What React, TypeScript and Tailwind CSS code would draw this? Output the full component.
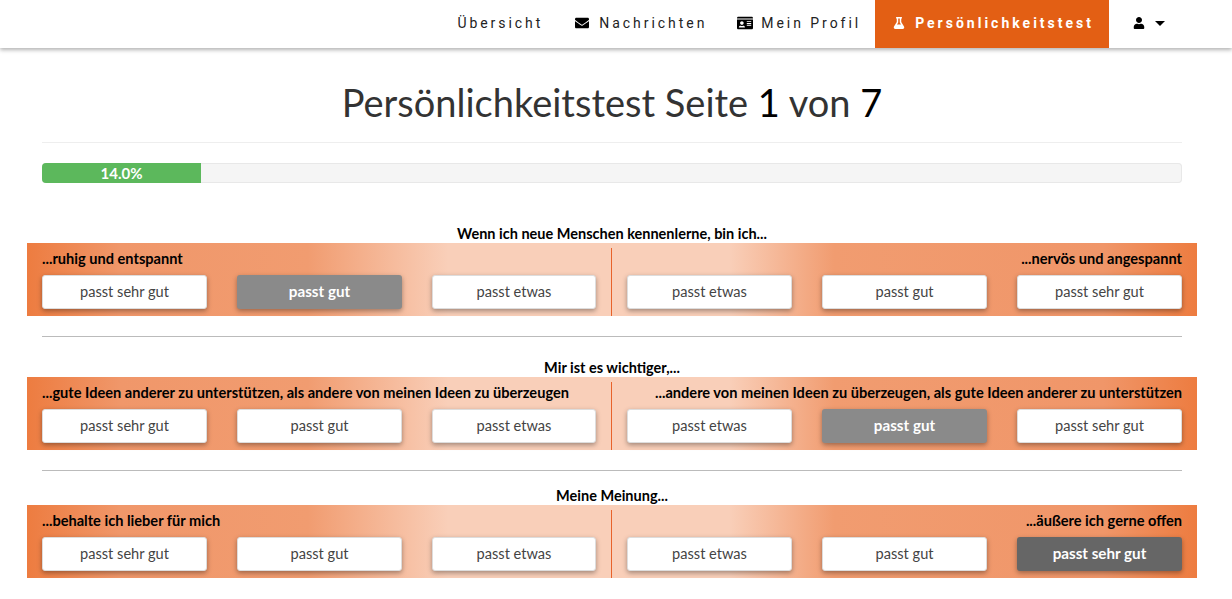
import React from "react";
import { FaEnvelope, FaIdCard, FaFlask, FaUser } from "react-icons/fa";

const body = "[font-family:'Lato','Noto_Sans',sans-serif]";

function Choice({ label, state }: { label: string; state?: "mid" | "dark" }) {
  const cls =
    state === "mid"
      ? "bg-[#8a8a8a] pb-[2px] text-[15.2px] font-bold text-white shadow-[0_2px_5px_rgba(0,0,0,0.35)]"
      : state === "dark"
      ? "bg-[#666666] pb-[2px] text-[15.2px] font-bold text-white shadow-[0_2px_5px_rgba(0,0,0,0.35)]"
      : "border border-[#dddddd] bg-white pb-px text-[14.6px] text-[#444] shadow-[0_2px_5px_rgba(0,0,0,0.35)]";
  return <button className={`flex h-[34px] items-center justify-center rounded-[3px] ${cls}`}>{label}</button>;
}

type Q = { title: string; left: string; right: string; sel: number; dark?: boolean; titleH: string };

function Question({ q }: { q: Q }) {
  const labels = ["passt sehr gut", "passt gut", "passt etwas", "passt etwas", "passt gut", "passt sehr gut"];
  const st = (i: number) => (i === q.sel ? (q.dark ? "dark" : "mid") : undefined) as "mid" | "dark" | undefined;
  return (
    <section>
      <h3 className={`flex items-end justify-center text-[14.5px] font-bold leading-[18px] text-black ${q.titleH}`}>
        {q.title}
      </h3>
      <div className="mx-[27px] grid h-[73px] w-[1170px] grid-cols-[585px_585px] bg-[linear-gradient(90deg,#ed7c40_0%,#f0976a_8%,#f19c70_24%,#f9cfb9_36%,#f9cfb9_60%,#f19c70_69%,#f09669_92%,#ed7c40_100%)]">
        <div className="mt-[5px] flex flex-col px-[15px] pr-[14px] [border-right:1px_solid_#e8622a]">
          <p className="h-[27px] pt-[2px] text-[14.6px] font-bold leading-[18px] text-black">{q.left}</p>
          <div className="grid grid-cols-[165px_165px_164px] gap-[30px]">
            {labels.slice(0, 3).map((l, i) => (
              <Choice key={i} label={l} state={st(i)} />
            ))}
          </div>
        </div>
        <div className="mt-[5px] flex flex-col px-[15px]">
          <p className="h-[27px] pt-[2px] text-right text-[14.6px] font-bold leading-[18px] text-black">{q.right}</p>
          <div className="grid grid-cols-3 gap-[30px]">
            {labels.slice(3).map((l, i) => (
              <Choice key={i} label={l} state={st(i + 3)} />
            ))}
          </div>
        </div>
      </div>
    </section>
  );
}

const questions: Q[] = [
  { title: "Wenn ich neue Menschen kennenlerne, bin ich...", left: "...ruhig und entspannt", right: "...nervös und angespannt", sel: 1, titleH: "h-[60px]" },
  { title: "Mir ist es wichtiger,...", left: "...gute Ideen anderer zu unterstützen, als andere von meinen Ideen zu überzeugen", right: "...andere von meinen Ideen zu überzeugen, als gute Ideen anderer zu unterstützen", sel: 4, titleH: "h-[40px]" },
  { title: "Meine Meinung...", left: "...behalte ich lieber für mich", right: "...äußere ich gerne offen", sel: 5, dark: true, titleH: "h-[34px]" },
];

export default function App() {
  return (
    <div className={`h-[599px] overflow-hidden bg-white ${body}`}>
      <nav className="flex h-12 items-center justify-end pr-[54px] text-[14px] tracking-[2.95px] text-[#222] shadow-[0_2px_4px_rgba(0,0,0,0.3)] [font-family:'Roboto',sans-serif]">
        <a className="flex h-12 items-center pb-[2px] pl-[15px] pr-[17px]">Übersicht</a>
        <a className="flex h-12 items-center gap-[10px] pb-[2px] pl-[15px] pr-[15px]">
          <FaEnvelope className="text-[14px] text-black" />
          <span>Nachrichten</span>
        </a>
        <a className="flex h-12 items-center gap-[8px] pb-[2px] pl-[15px] pr-[14px]">
          <FaIdCard className="text-[16px] text-black" />
          <span>Mein Profil</span>
        </a>
        <a className="flex h-12 items-center gap-[10px] bg-[#e35f14] pb-[2px] pl-[18px] pr-[15px] font-bold tracking-[3px] text-white">
          <FaFlask className="text-[12px]" />
          <span>Persönlichkeitstest</span>
        </a>
        <a className="flex h-12 items-center gap-[10px] pb-[2px] pl-[24px] pr-[13px] text-black">
          <FaUser className="text-[12px]" />
          <span className="h-0 w-0 border-x-[5px] border-t-[5px] border-x-transparent border-t-black" />
        </a>
      </nav>
      <main className="w-[1224px]">
        <h1 className="pt-[32px] text-center text-[38px] font-normal leading-[44px] text-[#333]">
          Persönlichkeitstest Seite <span className="text-black">1</span> von <span className="text-black">7</span>
        </h1>
        <hr className="mx-[42px] mt-[18px] border-[#eeeeee]" />
        <div className="relative mx-[42px] mt-[20px] h-5 overflow-hidden rounded-[4px] bg-[#f5f5f5] shadow-[inset_0_0_0_1px_#e8e8e8]">
          <div className="flex h-5 w-[159px] items-center justify-center bg-[#5cb85c] text-[15px] font-bold text-white">
            14.0%
          </div>
        </div>
        {questions.map((q, i) => (
          <React.Fragment key={i}>
            <Question q={q} />
            {i < 2 && <hr className="mx-[42px] mt-[20px] border-[#bbbbbb]" />}
          </React.Fragment>
        ))}
      </main>
    </div>
  );
}
